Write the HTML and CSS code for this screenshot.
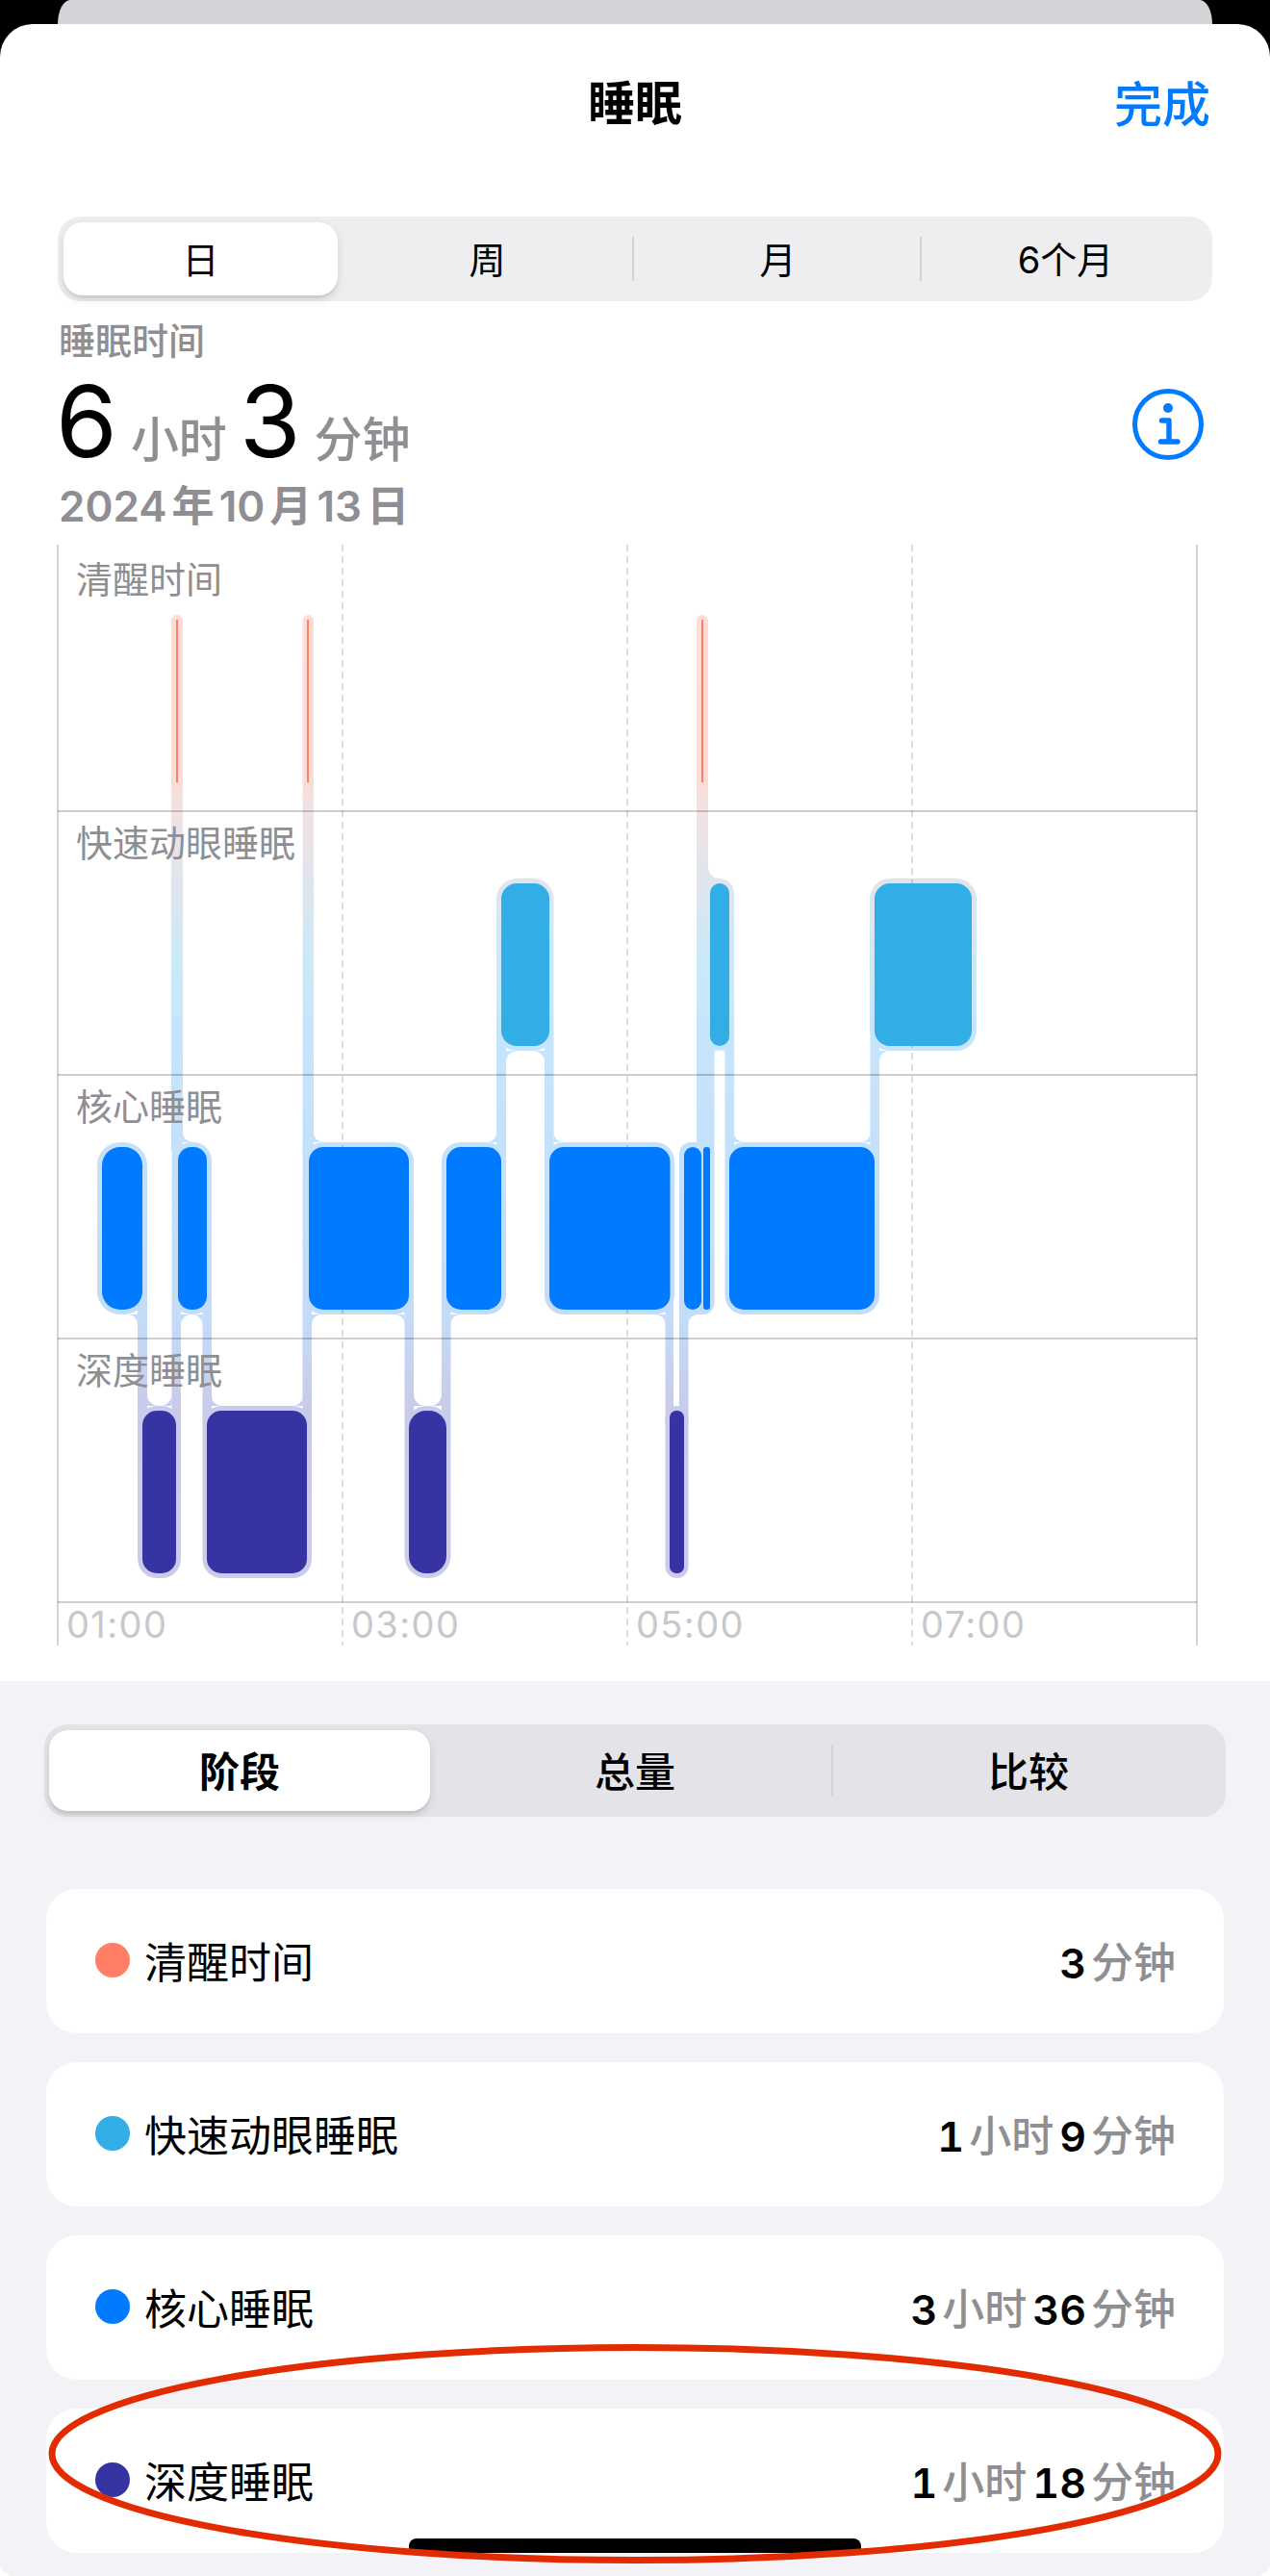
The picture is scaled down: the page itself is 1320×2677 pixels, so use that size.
FILE: index.html
```html
<!DOCTYPE html>
<html lang="zh-CN">
<head>
<meta charset="utf-8">
<title>睡眠</title>
<link rel="stylesheet" href="styles.css">
</head>
<body>
<div class="peek"></div>
<main class="sheet">
  <header class="nav">
    <h1 class="nav-title">睡眠</h1>
    <span class="nav-done">完成</span>
  </header>

  <div class="seg seg-range">
    <span class="seg-item is-active">日</span>
    <span class="seg-item">周</span>
    <span class="seg-item seg-sep">月</span>
    <span class="seg-item seg-sep">6个月</span>
  </div>

  <section class="summary">
    <div class="summary-label">睡眠时间</div>
    <div class="hero">
      <div class="hero-value">
        <span class="hero-num">6</span><span class="hero-unit">小时</span><span class="hero-num">3</span><span class="hero-unit">分钟</span>
      </div>
      <svg class="info" viewBox="0 0 76 76" width="76" height="76" aria-hidden="true">
        <circle cx="38" cy="38" r="34.5" fill="none" stroke="#007aff" stroke-width="5"/>
        <circle cx="38" cy="21" r="5" fill="#007aff"/>
        <path d="M31.5 34H39V56M30.5 56H48" fill="none" stroke="#007aff" stroke-width="5.4" stroke-linecap="round" stroke-linejoin="round"/>
      </svg>
    </div>
    <div class="summary-date">2024 年 10 月 13 日</div>
  </section>

  <section class="chart">
    <svg class="chart-art" viewBox="0 566 1320 1154" width="1320" height="1154" aria-hidden="true">
      <defs>
        <linearGradient id="halo" gradientUnits="userSpaceOnUse" x1="0" y1="639" x2="0" y2="1640">
          <stop offset="0" stop-color="#ffdcd6"/>
          <stop offset="0.173" stop-color="#fddcd6"/>
          <stop offset="0.19" stop-color="#f5e1e1"/>
          <stop offset="0.36" stop-color="#cbe9f8"/>
          <stop offset="0.45" stop-color="#c6e4fb"/>
          <stop offset="0.55" stop-color="#c4e1fc"/>
          <stop offset="0.727" stop-color="#c3dcf8"/>
          <stop offset="0.82" stop-color="#c9cbea"/>
          <stop offset="1" stop-color="#cdcbea"/>
        </linearGradient>
      </defs>

      <g class="halos" fill="url(#halo)">
        <!-- awake columns -->
        <rect x="178" y="639" width="12" height="561" rx="6"/>
        <rect x="314.5" y="639" width="11.5" height="561" rx="5.7"/>
        <rect x="724" y="639" width="12" height="291" rx="6"/>
        <!-- rem -->
        <rect x="516" y="913" width="59.5" height="179" rx="21"/>
        <rect x="733" y="913" width="30" height="179" rx="15"/>
        <rect x="904" y="913" width="111" height="179" rx="21"/>
        <!-- core -->
        <rect x="101" y="1187" width="52" height="179" rx="24"/>
        <rect x="180" y="1187" width="40" height="179" rx="19"/>
        <rect x="316" y="1187" width="114" height="179" rx="20"/>
        <rect x="459" y="1187" width="67" height="179" rx="20"/>
        <rect x="566" y="1187" width="135" height="179" rx="20"/>
        <rect x="706" y="1187" width="36.5" height="179" rx="12"/>
        <rect x="753.5" y="1187" width="160.5" height="179" rx="20"/>
        <!-- deep -->
        <rect x="143" y="1461" width="45" height="179" rx="20"/>
        <rect x="210.5" y="1461" width="113.5" height="179" rx="20"/>
        <rect x="420.5" y="1461" width="48" height="179" rx="23"/>
        <rect x="691.5" y="1461" width="24" height="179" rx="12"/>
        <!-- connectors -->
        <rect x="143" y="1340" width="10" height="140"/>
        <rect x="178.5" y="1190" width="9.5" height="290"/>
        <rect x="210.5" y="1340" width="9.5" height="140"/>
        <rect x="314.5" y="1190" width="9.5" height="290"/>
        <rect x="420.5" y="1340" width="9.5" height="140"/>
        <rect x="459" y="1340" width="9.5" height="140"/>
        <rect x="516" y="1070" width="10" height="140"/>
        <rect x="566" y="1070" width="9.5" height="140"/>
        <rect x="691.5" y="1340" width="8.5" height="140"/>
        <rect x="706" y="1340" width="9.5" height="140"/>
        <rect x="724" y="925" width="18.5" height="275"/>
        <rect x="736" y="913" width="12" height="15"/>
        <rect x="753.5" y="1070" width="9.5" height="140"/>
        <rect x="904.5" y="1070" width="9.5" height="140"/>
        <!-- fillets -->
        <path d="M133 1366H143V1376A10 10 0 0 0 133 1366Z"/>
        <path d="M410.5 1366H420.5V1376A10 10 0 0 0 410.5 1366Z"/>
        <path d="M681.5 1366H691.5V1376A10 10 0 0 0 681.5 1366Z"/>
        <path d="M334 1366H324V1376A10 10 0 0 1 334 1366Z"/>
        <path d="M478.5 1366H468.5V1376A10 10 0 0 1 478.5 1366Z"/>
        <path d="M725.5 1366H715.5V1376A10 10 0 0 1 725.5 1366Z"/>
        <path d="M924 1092H914V1102A10 10 0 0 1 924 1092Z"/>
        <path d="M304.5 1461H314.5V1451A10 10 0 0 1 304.5 1461Z"/>
        <path d="M506 1187H516V1177A10 10 0 0 1 506 1187Z"/>
        <path d="M894.5 1187H904.5V1177A10 10 0 0 1 894.5 1187Z"/>
        <path d="M230 1461H220V1451A10 10 0 0 0 230 1461Z"/>
        <path d="M200 1187H190V1177A10 10 0 0 0 200 1187Z"/>
        <path d="M336 1187H326V1177A10 10 0 0 0 336 1187Z"/>
        <path d="M585.5 1187H575.5V1177A10 10 0 0 0 585.5 1187Z"/>
        <path d="M748 913H736V901A12 12 0 0 0 748 913Z"/>
        <path d="M773 1187H763V1177A10 10 0 0 0 773 1187Z"/>
        <!-- rounded notches -->
        <path d="M165 1461H153V1449A12 12 0 0 0 165 1461Z"/>
        <path d="M166.5 1461H178.5V1449A12 12 0 0 1 166.5 1461Z"/>
        <path d="M199 1366H188V1377A11 11 0 0 1 199 1366Z"/>
        <path d="M199.5 1366H210.5V1377A11 11 0 0 0 199.5 1366Z"/>
        <path d="M442 1461H430V1449A12 12 0 0 0 442 1461Z"/>
        <path d="M447 1461H459V1449A12 12 0 0 1 447 1461Z"/>
        <path d="M538 1092H526V1104A12 12 0 0 1 538 1092Z"/>
        <path d="M554 1092H566V1104A12 12 0 0 0 554 1092Z"/>
        <path d="M746.5 1092H742.5V1096A4 4 0 0 1 746.5 1092Z"/>
        <path d="M749.5 1092H753.5V1096A4 4 0 0 0 749.5 1092Z"/>
      </g>

      <g class="grid-h">
        <line x1="60" x2="1244" y1="843" y2="843"/>
        <line x1="60" x2="1244" y1="1117" y2="1117"/>
        <line x1="60" x2="1244" y1="1391" y2="1391"/>
        <line x1="60" x2="1244" y1="1665" y2="1665"/>
      </g>
      <g class="grid-v">
        <line x1="60" x2="60" y1="566" y2="1710"/>
        <line x1="1244" x2="1244" y1="566" y2="1710"/>
      </g>
      <g class="grid-d">
        <line x1="356" x2="356" y1="566" y2="1710"/>
        <line x1="652" x2="652" y1="566" y2="1710"/>
        <line x1="948" x2="948" y1="566" y2="1710"/>
      </g>

      <g fill="#ff7f66">
        <rect x="183" y="644" width="2" height="169"/>
        <rect x="319" y="644" width="2" height="169"/>
        <rect x="729" y="644" width="2" height="169"/>
      </g>
      <g fill="#32ade6">
        <rect x="521" y="918" width="50" height="169" rx="16"/>
        <rect x="738" y="918" width="20" height="169" rx="10"/>
        <rect x="909" y="918" width="101" height="169" rx="16"/>
      </g>
      <g fill="#007aff">
        <rect x="106" y="1192" width="42" height="169" rx="19"/>
        <rect x="185" y="1192" width="30" height="169" rx="14"/>
        <rect x="321" y="1192" width="104" height="169" rx="15"/>
        <rect x="464" y="1192" width="57" height="169" rx="15"/>
        <rect x="571" y="1192" width="125.500" height="169" rx="15"/>
        <rect x="711" y="1192" width="18" height="169" rx="9"/>
        <rect x="731" y="1192" width="7" height="169" rx="3"/>
        <rect x="758" y="1192" width="151" height="169" rx="15"/>
      </g>
      <g fill="#3634a3">
        <rect x="148" y="1466" width="35" height="169" rx="15"/>
        <rect x="215" y="1466" width="104" height="169" rx="15"/>
        <rect x="425" y="1466" width="39" height="169" rx="18"/>
        <rect x="696" y="1466" width="15" height="169" rx="7"/>
      </g>
    </svg>

    <div class="lanes">
      <div class="lane">清醒时间</div>
      <div class="lane">快速动眼睡眠</div>
      <div class="lane">核心睡眠</div>
      <div class="lane">深度睡眠</div>
    </div>
    <div class="times">
      <span class="time">01:00</span>
      <span class="time">03:00</span>
      <span class="time">05:00</span>
      <span class="time">07:00</span>
    </div>
  </section>

  <section class="details">
    <div class="seg seg-mode">
      <span class="seg-item is-active">阶段</span>
      <span class="seg-item">总量</span>
      <span class="seg-item seg-sep">比较</span>
    </div>

    <ul class="stages">
      <li class="stage">
        <span class="dot dot-awake"></span><span class="stage-name">清醒时间</span>
        <span class="stage-value"><b>3</b><i>分钟</i></span>
      </li>
      <li class="stage">
        <span class="dot dot-rem"></span><span class="stage-name">快速动眼睡眠</span>
        <span class="stage-value"><b>1</b><i>小时</i><b>9</b><i>分钟</i></span>
      </li>
      <li class="stage">
        <span class="dot dot-core"></span><span class="stage-name">核心睡眠</span>
        <span class="stage-value"><b>3</b><i>小时</i><b>36</b><i>分钟</i></span>
      </li>
      <li class="stage">
        <span class="dot dot-deep"></span><span class="stage-name">深度睡眠</span>
        <span class="stage-value"><b>1</b><i>小时</i><b>18</b><i>分钟</i></span>
      </li>
    </ul>
  </section>

  <div class="home-bar"></div>
  <svg class="annotation" viewBox="0 0 1232 236" width="1232" height="236" aria-hidden="true">
    <ellipse cx="616" cy="118" rx="606" ry="110.500" fill="none" stroke="#e22b00" stroke-width="7"/>
  </svg>
</main>
</body>
</html>
```

FILE: styles.css
```css
* { box-sizing: border-box; }

html, body {
  margin: 0;
  padding: 0;
  background: #000;
}

body {
  width: 1320px;
  height: 2677px;
  overflow: hidden;
  font-family: Inter, "Noto Sans CJK SC", sans-serif;
  color: #000;
}

.peek {
  height: 25px;
  margin: 0 60px;
  background: #d4d3d8;
  border-radius: 13px 13px 0 0 / 25px 25px 0 0;
}

.sheet {
  position: relative;
  height: 2652px;
  background: #fff;
  border-radius: 34px 34px 0 0;
  overflow: hidden;
}

/* Navigation */
.nav {
  position: relative;
  height: 168px;
  display: flex;
  align-items: center;
  justify-content: center;
  padding-bottom: 2px;
}

.nav-title {
  margin: 0;
  font-size: 49px;
  font-weight: 700;
  line-height: 60px;
}

.nav-done {
  position: absolute;
  right: 62px;
  top: 54px;
  font-size: 50px;
  font-weight: 500;
  line-height: 60px;
  color: #007aff;
}

/* Segmented controls */
.seg {
  display: flex;
  background: #eeeef0;
  border-radius: 24px;
  padding: 6px;
}

.seg-range {
  height: 88px;
  margin: 32px 60px 0;
}

.seg-mode {
  height: 96px;
  margin: 0 46px;
  padding: 6px 5px;
  background: #e3e3e8;
}

.seg-item {
  position: relative;
  display: flex;
  align-items: center;
  justify-content: center;
  padding-bottom: 3px;
  font-size: 38px;
  border-radius: 20px;
}

.seg-range .seg-item {
  flex: 0 0 299px;
}

.seg-mode .seg-item {
  flex: 0 0 406px;
  font-size: 42px;
  font-weight: 500;
}

.seg-range .seg-item.is-active {
  flex-basis: 285px;
  margin-right: 6px;
}

.seg-mode .seg-item.is-active {
  flex-basis: 396px;
  margin-right: 10px;
  font-weight: 700;
}

.seg-item.is-active {
  background: #fff;
  box-shadow: 0 4px 10px rgba(0, 0, 0, 0.12), 0 3px 1px rgba(0, 0, 0, 0.05);
}

.seg-item.seg-sep {
  padding-left: 6px;
}

.seg-sep::before {
  content: "";
  position: absolute;
  left: 1px;
  top: 15px;
  bottom: 15px;
  width: 2px;
  background: #d3d3d6;
}

/* Summary */
.summary {
  padding: 19px 68px 0 61px;
}

.summary-label {
  font-size: 38px;
  font-weight: 500;
  line-height: 44px;
  color: #8e8e93;
}

.hero {
  display: flex;
  align-items: center;
  justify-content: space-between;
  height: 100px;
  margin-top: 12px;
}

.hero-value {
  display: flex;
  align-items: baseline;
  margin-left: -3px;
}

.hero-num {
  font-size: 103px;
  line-height: 100px;
  font-weight: 400;
  letter-spacing: -3px;
}

.hero-unit {
  font-size: 50px;
  font-weight: 500;
  color: #8e8e93;
  margin: 0 13px 0 17px;
}

.info {
  margin-top: 6px;
}

.summary-date {
  font-size: 44px;
  font-weight: 600;
  line-height: 52px;
  color: #8e8e93;
  word-spacing: -6px;
  margin-top: 12px;
}

/* Chart */
.chart {
  position: relative;
  height: 1154px;
  margin-top: 14px;
  padding-top: 3px;
}

.chart-art {
  position: absolute;
  left: 0;
  top: 0;
  display: block;
}

.grid-h line {
  stroke: rgba(0, 0, 0, 0.26);
  stroke-width: 1.5;
}

.grid-v line {
  stroke: rgba(0, 0, 0, 0.22);
  stroke-width: 1.5;
}

.grid-d line {
  stroke: rgba(0, 0, 0, 0.18);
  stroke-width: 1.5;
  stroke-dasharray: 7 5;
}

.lanes {
  position: relative;
  margin-left: 79px;
}

.lane {
  height: 274px;
  padding-top: 11px;
  font-size: 38px;
  line-height: 44px;
  color: #8e8e93;
}

.times {
  position: relative;
  display: flex;
  margin-left: 60px;
}

.time {
  width: 296px;
  padding-left: 9px;
  font-size: 38px;
  letter-spacing: 1.4px;
  line-height: 46px;
  color: #c7c7cc;
}

/* Details */
.details {
  background: #f2f2f7;
  height: 930px;
  margin-top: 27px;
  padding-top: 45px;
  border-radius: 0 0 14px 14px;
}

.stages {
  list-style: none;
  margin: 75px 48px 0;
  padding: 0;
  display: flex;
  flex-direction: column;
  gap: 30px;
}

.stage {
  height: 150px;
  display: flex;
  align-items: center;
  padding: 0 50px 2px 51px;
  background: #fff;
  border-radius: 32px;
}

.dot {
  width: 36px;
  height: 36px;
  border-radius: 50%;
  margin-right: 15px;
}

.dot-awake { background: #ff7f66; }
.dot-rem { background: #32ade6; }
.dot-core { background: #007aff; }
.dot-deep { background: #3634a3; }

.stage-name {
  font-size: 44px;
  font-weight: 400;
}

.stage-value {
  margin-left: auto;
  display: flex;
  align-items: baseline;
  font-size: 44px;
}

.stage-value b {
  font-size: 43px;
  font-weight: 600;
  font-variant-numeric: tabular-nums;
}

.stage-value i {
  font-style: normal;
  font-weight: 500;
  color: #8e8e93;
  margin: 0 6px 0 5px;
}

.stage-value i:last-child {
  margin-right: 0;
}

/* Overlays */
.home-bar {
  position: absolute;
  left: 425px;
  top: 2613px;
  width: 470px;
  height: 15px;
  background: #000;
  border-radius: 8px 8px 0 0;
}

.annotation {
  position: absolute;
  left: 43.500px;
  top: 2407px;
}
```
